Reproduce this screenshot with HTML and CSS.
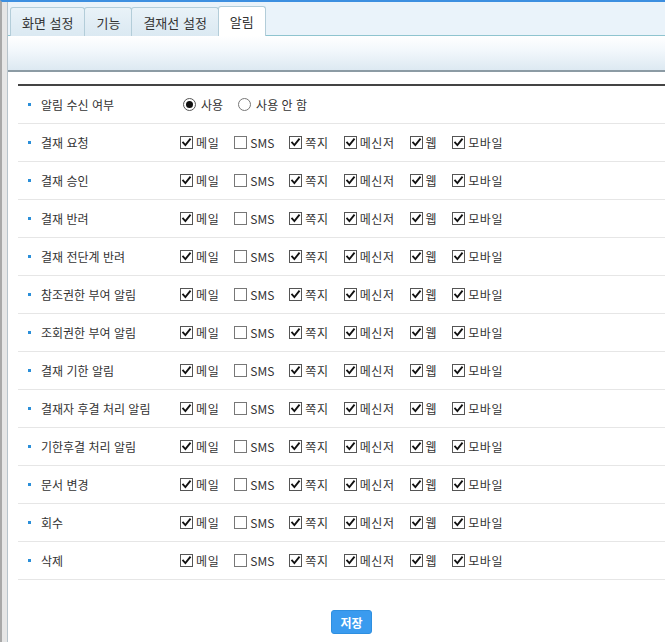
FILE: index.html
```html
<!DOCTYPE html>
<html lang="ko">
<head>
<meta charset="utf-8">
<link rel="stylesheet" href="styles.css">
</head>
<body>
<div class="frame">
  <div class="page">
    <div class="tabbar">
      <div class="tab">화면 설정</div>
      <div class="tab">기능</div>
      <div class="tab">결재선 설정</div>
      <div class="tab active">알림</div>
    </div>
    <div class="toolbar"></div>
    <div class="content">
      <div class="rows" id="rows">
        <div class="row">
          <div class="label"><span class="dot"></span>알림 수신 여부</div>
          <div class="ctrls">
            <span class="opt"><span class="radio on"></span>사용</span>
            <span class="opt"><span class="radio"></span>사용 안 함</span>
          </div>
        </div>
      </div>
      <div class="actions"><button class="save">저장</button></div>
    </div>
  </div>
</div>
<script>
var labels=["결재 요청","결재 승인","결재 반려","결재 전단계 반려","참조권한 부여 알림","조회권한 부여 알림","결재 기한 알림","결재자 후결 처리 알림","기한후결 처리 알림","문서 변경","회수","삭제"];
var opts=[["메일",1],["SMS",0],["쪽지",1],["메신저",1],["웹",1],["모바일",1]];
var chk='<svg viewBox="0 0 13 13" width="13" height="13"><path d="M2.5 6.5 L5.2 9.6 L10.6 2.8" fill="none" stroke="#111" stroke-width="2.2" stroke-linecap="square"/></svg>';
var html="";
labels.forEach(function(l){
  html+='<div class="row"><div class="label"><span class="dot"></span>'+l+'</div><div class="ctrls">';
  opts.forEach(function(o){
    html+='<span class="opt"><span class="box'+(o[1]?' on':'')+'">'+(o[1]?chk:'')+'</span><span class="'+(o[0]==="SMS"?'lat':'kor')+'">'+o[0]+'</span></span>';
  });
  html+='</div></div>';
});
document.getElementById("rows").insertAdjacentHTML("beforeend",html);
</script>
</body>
</html>
```
FILE: styles.css
```css
html,body{margin:0;padding:0;background:#fff;}
body{
  font-family:"Noto Sans CJK KR","Noto Sans",sans-serif;
  font-size:12px;color:#333;
  width:665px;height:642px;overflow:hidden;
}
.frame{
  height:642px;
  border-left:2px solid #a8a8a8;
  border-top:2px solid #3d8fe0;
  padding-left:5px;
  background:#e6e6e6;
  box-sizing:border-box;
}
.page{
  height:100%;
  background:#fff;
  border-left:1px solid #b7c3cb;
}
.tabbar{
  display:flex;
  padding-left:2px;
  align-items:flex-end;
  background:#eaf3fa;
  border-bottom:1px solid #8fc4cf;
  box-sizing:border-box;
  height:34px;
}
.tab{
  height:29px;
  padding:0 11px;
  line-height:29px;
  border:1px solid #b3cdd9;
  border-bottom:none;
  border-radius:3px 3px 0 0;
  background:linear-gradient(#e9f2f8,#dbe9f2);
  margin-right:-1px;
  color:#333;
  font-size:13px;
  margin-bottom:-1px;
  box-sizing:border-box;
}
.tab.active{background:#fff;height:30px;}
.toolbar{
  height:36px;
  background:linear-gradient(#ffffff 0%,#f3f8fc 40%,#dde9f2 100%);
  border-bottom:2px solid #8c9ba4;
  box-sizing:border-box;
}
.content{padding:12px 0 0 10px;}
.rows{border-top:2px solid #444;}
.row{
  display:flex;
  height:38px;
  align-items:center;
  border-bottom:1px solid #e6e6e6;
  box-sizing:border-box;
}
.label{
  width:162px;
  flex:none;
  box-sizing:border-box;
  padding-left:10px;
  display:flex;
  align-items:center;
  color:#333;
}
.dot{
  width:3px;height:3px;background:#2b8fd9;margin-right:10px;
}
.ctrls{display:flex;align-items:center;gap:15px;}
.opt{display:flex;align-items:center;gap:3px;color:#333;}
.kor{letter-spacing:.6px;}
.box{
  width:13px;height:13px;box-sizing:border-box;
  border:1px solid #555;background:#fff;
  display:flex;align-items:center;justify-content:center;
}
.box:not(.on){border-color:#777;}
.box svg{display:block;}
.radio{
  width:13px;height:13px;border-radius:50%;
  border:1px solid #555;box-sizing:border-box;
  display:flex;align-items:center;justify-content:center;
  margin-right:2px;
}
.radio:not(.on){border-color:#777;}
.radio.on::after{content:"";width:7px;height:7px;border-radius:50%;background:#111;}
.opt:first-child .radio{margin-left:3px;}
.actions{padding:30px 0 0 313px;}
.save{
  width:41px;height:24px;
  border:1px solid #2e8fe0;
  background:#3a9bef;
  color:#fff;font-weight:bold;
  font-family:"Noto Sans CJK KR",sans-serif;
  font-size:12px;
  border-radius:3px;
  padding:0;
}
```
